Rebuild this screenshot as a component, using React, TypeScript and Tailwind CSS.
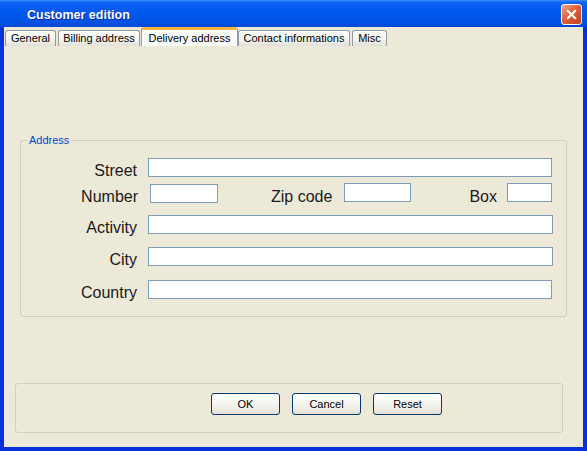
import { X } from "lucide-react";

const tabs = [
  { label: "General", w: "w-[51px]", ml: "ml-[1px]" },
  { label: "Billing address", w: "w-[82px]", ml: "ml-[2px]" },
  { label: "Delivery address", w: "w-[97px]", ml: "ml-[1px]", active: true },
  { label: "Contact informations", w: "w-[112px]", ml: "ml-0" },
  { label: "Misc", w: "w-[35px]", ml: "ml-[2px]" },
];

function Field({ className = "" }: { className?: string }) {
  return (
    <input
      type="text"
      className={`h-[19px] bg-white border border-[#7f9db9] outline-none ${className}`}
    />
  );
}

function Label({ text, className = "" }: { text: string; className?: string }) {
  return (
    <span className={`translate-y-[3px] text-[16px] leading-[18px] text-[#1a1a1a] whitespace-nowrap ${className}`}>
      {text}
    </span>
  );
}

function XpButton({ text }: { text: string }) {
  return (
    <button className="w-[69px] h-[22px] rounded-[3px] border border-[#003c74] bg-[linear-gradient(to_bottom,#ffffff,#f3f2ec_60%,#e3e0d2)] text-[11px] text-black">
      {text}
    </button>
  );
}

export default function App() {
  return (
    <div className="w-[587px] h-[451px] flex flex-col bg-[#0831d9] font-['Liberation_Sans',Arial,sans-serif] overflow-hidden">
      {/* title bar */}
      <div className="h-[27px] shrink-0 flex items-center justify-between pl-[27px] pr-[5px] bg-[linear-gradient(to_bottom,#3b8dff_0%,#0b61f2_10%,#0058ee_45%,#0052e2_85%,#0046d4_100%)]">
        <span className="pt-[3px] text-[12.5px] font-bold text-white [text-shadow:1px_1px_0_#0a2a9a]">
          Customer edition
        </span>
        <div className="mt-[2px] w-[21px] h-[21px] rounded-[3px] border border-white bg-[linear-gradient(135deg,#f0a58a,#e0603c_45%,#c7401c)] flex items-center justify-center">
          <X size={15} strokeWidth={3.5} color="white" />
        </div>
      </div>

      {/* body */}
      <div className="flex-1 mx-[4px] mb-[4px] bg-[#ece9d8] flex flex-col">
        {/* tabs */}
        <div className="h-[19px] flex items-end">
          {tabs.map((t) =>
            t.active ? (
              <div
                key={t.label}
                className={`${t.w} ${t.ml} h-[19px] flex items-center justify-center bg-[#fcfcfe] border-x border-[#919b9c] border-t-[3px] border-t-[#f7b33c] rounded-t-[3px] text-[11px] text-black z-10`}
              >
                {t.label}
              </div>
            ) : (
              <div
                key={t.label}
                className={`${t.w} ${t.ml} h-[16px] flex items-center justify-center border-x border-t border-[#919b9c] rounded-t-[3px] bg-[linear-gradient(to_bottom,#ffffff,#f3f3ef_60%,#e2e1d8)] text-[11px] text-black`}
              >
                {t.label}
              </div>
            )
          )}
        </div>

        {/* address group */}
        <div className="relative mt-[94px] ml-[16px] mr-[16px] h-[177px] border border-[#d0d0bf] rounded-[3px]">
          <span className="absolute -top-[9px] left-[6px] px-[2px] bg-[#ece9d8] text-[11px] text-[#0046d5]">
            Address
          </span>

          <div className="flex items-center h-[19px] mt-[17px]">
            <Label text="Street" className="w-[116px] text-right" />
            <Field className="ml-[11px] w-[404px]" />
          </div>

          <div className="flex items-center h-[19px] mt-[7px]">
            <Label text="Number" className="w-[117px] text-right" />
            <Field className="ml-[12px] w-[68px]" />
            <Label text="Zip code" className="ml-[53px]" />
            <Field className="ml-[12px] w-[67px] h-[18px] -mt-[2px]" />
            <Label text="Box" className="ml-[58px]" />
            <Field className="ml-[10px] w-[45px] h-[18px] -mt-[2px]" />
          </div>

          <div className="flex items-center h-[19px] mt-[12px]">
            <Label text="Activity" className="w-[116px] text-right" />
            <Field className="ml-[11px] w-[405px]" />
          </div>

          <div className="flex items-center h-[19px] mt-[13px]">
            <Label text="City" className="w-[116px] text-right" />
            <Field className="ml-[11px] w-[405px]" />
          </div>

          <div className="flex items-center h-[19px] mt-[14px]">
            <Label text="Country" className="w-[116px] text-right" />
            <Field className="ml-[11px] w-[404px]" />
          </div>
        </div>

        {/* buttons panel */}
        <div className="mt-[66px] ml-[11px] mr-[20px] h-[50px] border border-[#d0d0bf] rounded-[3px] flex gap-[12px] pl-[195px] pt-[9px]">
          <XpButton text="OK" />
          <XpButton text="Cancel" />
          <XpButton text="Reset" />
        </div>
      </div>
    </div>
  );
}
